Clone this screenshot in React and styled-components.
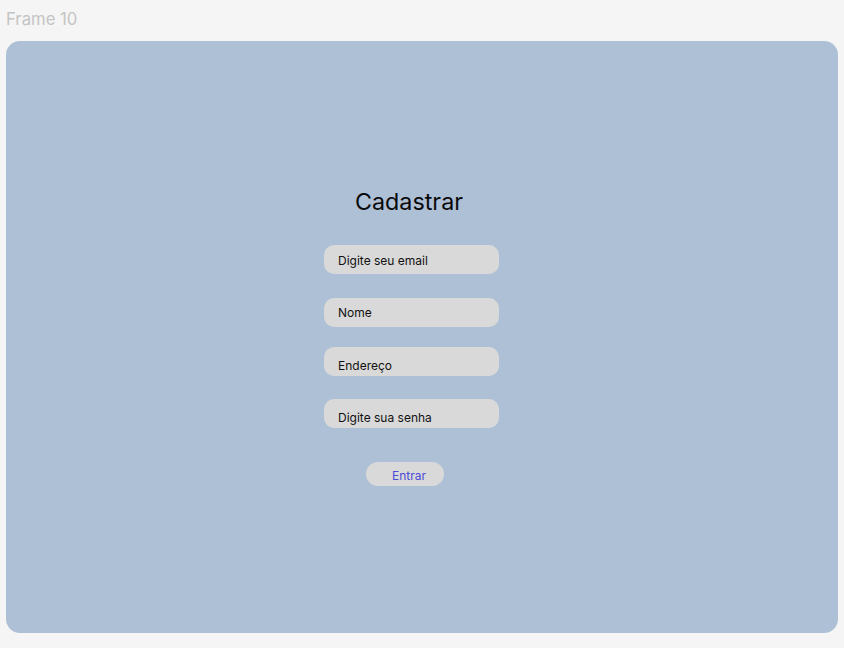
import styled, { createGlobalStyle } from 'styled-components';

const GlobalStyle = createGlobalStyle`
    html, body {
        margin: 0;
        padding: 0;
        background: #f5f5f5;
        font-family: Inter, "Noto Sans", sans-serif;
    }
    `

const Page = styled.div`
    display: flex;
    flex-direction: column;
    padding: 0 6px;
    min-height: 648px;
    box-sizing: border-box;
    `

const FrameLabel = styled.div`
    color: #c4c4c4;
    font-size: 16.7px;
    line-height: 20px;
    padding-top: 9px;
    height: 41px;
    box-sizing: border-box;
    `

const Frame = styled.div`
    display: flex;
    background: #aec0d6;
    border-radius: 14px;
    width: 832px;
    height: 592px;
    padding-top: 146px;
    padding-left: 318px;
    box-sizing: border-box;
    `

const Form = styled.div`
    display: flex;
    flex-direction: column;
    align-items: flex-start;
    width: 175px;
    `

const Title = styled.h1`
    margin: 0 0 0 31px;
    font-weight: 400;
    font-size: 23.3px;
    line-height: 29px;
    color: #0a0a0a;
    `

const Field = styled.div`
    width: 175px;
    height: 29px;
    box-sizing: border-box;
    background: #d9d9d9;
    border-radius: 10px;
    padding-left: 14px;
    padding-top: ${props => props.textTop}px;
    margin-top: ${props => props.gap}px;
    font-size: 12px;
    line-height: 15px;
    color: #111;
    `

const Button = styled.button`
    margin-top: 34px;
    margin-left: 42px;
    width: 78px;
    height: 24px;
    box-sizing: border-box;
    border: none;
    border-radius: 12px;
    background: #d9d9d9;
    padding: 3px 0 0 26px;
    text-align: left;
    font-family: Inter, "Noto Sans", sans-serif;
    font-size: 12px;
    line-height: 15px;
    color: #4b4bd8;
    cursor: pointer;
    `

const fields = [
    { label: 'Digite seu email', gap: 29, textTop: 8 },
    { label: 'Nome', gap: 24, textTop: 7 },
    { label: 'Endereço', gap: 20, textTop: 11 },
    { label: 'Digite sua senha', gap: 23, textTop: 11 },
]

const App = () => {
    return (
        <Page>
            <GlobalStyle />
            <FrameLabel>Frame 10</FrameLabel>
            <Frame>
                <Form>
                    <Title>Cadastrar</Title>
                    {fields.map(f => (
                        <Field key={f.label} gap={f.gap} textTop={f.textTop}>{f.label}</Field>
                    ))}
                    <Button>Entrar</Button>
                </Form>
            </Frame>
        </Page>
    )
}

export default App;
